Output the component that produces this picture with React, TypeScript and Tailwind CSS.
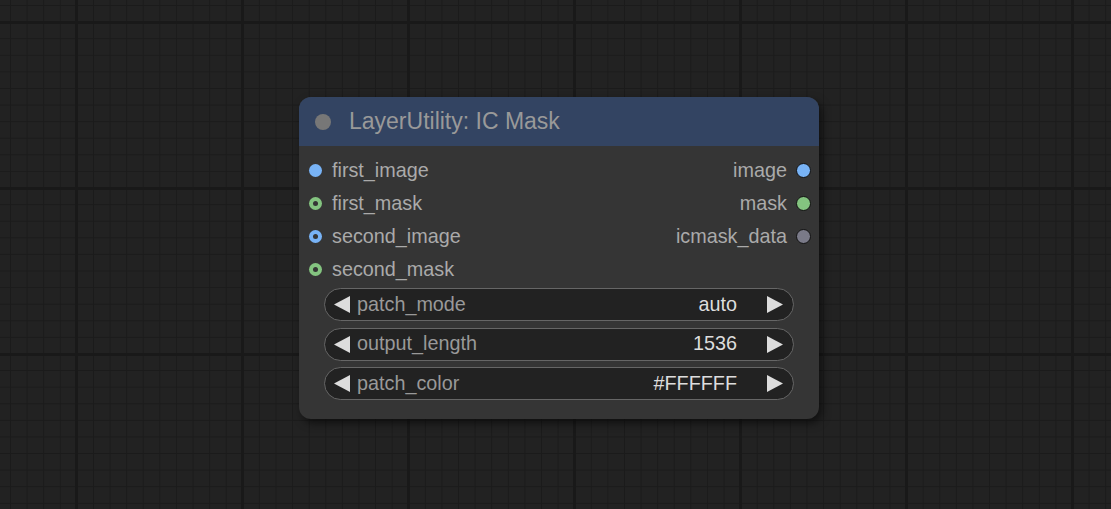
import React from 'react';

type Slot = { name: string; color: string; ring?: boolean };

const inputs: Slot[] = [
  { name: 'first_image', color: '#78b3f6' },
  { name: 'first_mask', color: '#84c480', ring: true },
  { name: 'second_image', color: '#78b3f6', ring: true },
  { name: 'second_mask', color: '#84c480', ring: true },
];

const outputs: Slot[] = [
  { name: 'image', color: '#78b3f6' },
  { name: 'mask', color: '#84c480' },
  { name: 'icmask_data', color: '#7a7a88' },
];

const widgets = [
  { label: 'patch_mode', value: 'auto' },
  { label: 'output_length', value: '1536' },
  { label: 'patch_color', value: '#FFFFFF' },
];

const Arrow: React.FC<{ dir: 'left' | 'right' }> = ({ dir }) => (
  <svg width="16" height="17" viewBox="0 0 16 17" className="shrink-0">
    {dir === 'left' ? (
      <polygon points="16,0 16,17 0,8.5" fill="#dddddd" />
    ) : (
      <polygon points="0,0 0,17 16,8.5" fill="#dddddd" />
    )}
  </svg>
);

const InputDot: React.FC<{ slot: Slot }> = ({ slot }) => (
  <span
    className="w-[13px] h-[13px] rounded-full flex items-center justify-center shrink-0"
    style={{ backgroundColor: slot.color }}
  >
    {slot.ring && <span className="w-[5px] h-[5px] rounded-full bg-[#353535]" />}
  </span>
);

export default function App() {
  return (
    <div
      className="w-[1111px] h-[509px] overflow-hidden bg-[#222222] pl-[299px] pt-[97px] font-['Liberation_Sans',Arial,sans-serif]
        [background-image:linear-gradient(to_right,#191919_0_3px,transparent_3px),linear-gradient(to_bottom,#191919_0_3px,transparent_3px),linear-gradient(to_right,#1b1b1b_0_1px,transparent_1px),linear-gradient(to_bottom,#1b1b1b_0_1px,transparent_1px)]
        [background-size:166px_166px,166px_166px,16.6px_16.6px,16.6px_16.6px]
        [background-position:75px_21px,75px_21px,10px_5px,10px_5px]"
    >
      <div className="w-[520px] h-[322px] rounded-[12px] bg-[#353535] shadow-[3px_4px_8px_rgba(0,0,0,0.55)] overflow-hidden flex flex-col">
        {/* title */}
        <div className="h-[49px] bg-[#334462] flex items-center shrink-0">
          <span className="ml-[16px] w-[16px] h-[16px] rounded-full bg-[#777777]" />
          <span className="ml-[18px] text-[23px] text-[#999999] leading-none">LayerUtility: IC Mask</span>
        </div>

        {/* slots */}
        <div className="pt-[8px] flex">
          <div className="flex-1 flex flex-col">
            {inputs.map((s) => (
              <div key={s.name} className="h-[33px] flex items-center pl-[10px]">
                <InputDot slot={s} />
                <span className="ml-[10px] text-[19.8px] text-[#aaaaaa] leading-none">{s.name}</span>
              </div>
            ))}
          </div>
          <div className="flex flex-col">
            {outputs.map((s) => (
              <div key={s.name} className="h-[33px] flex items-center justify-end pr-[8px]">
                <span className="mr-[9px] text-[19.8px] text-[#aaaaaa] leading-none">{s.name}</span>
                <span
                  className="w-[15px] h-[15px] rounded-full border-[1.5px] border-[#111111] shrink-0"
                  style={{ backgroundColor: s.color }}
                />
              </div>
            ))}
          </div>
        </div>

        {/* widgets */}
        <div className="mt-[2px] flex flex-col gap-[6.5px] px-[25px]">
          {widgets.map((w) => (
            <div
              key={w.label}
              className="h-[33px] rounded-full border border-[#666666] bg-[#222222] flex items-center pl-[9px] pr-[10px]"
            >
              <Arrow dir="left" />
              <span className="ml-[7px] text-[19.8px] text-[#999999] leading-none">{w.label}</span>
              <span className="ml-auto mr-[30px] text-[19.8px] text-[#dddddd] leading-none">{w.value}</span>
              <Arrow dir="right" />
            </div>
          ))}
        </div>
      </div>
    </div>
  );
}
